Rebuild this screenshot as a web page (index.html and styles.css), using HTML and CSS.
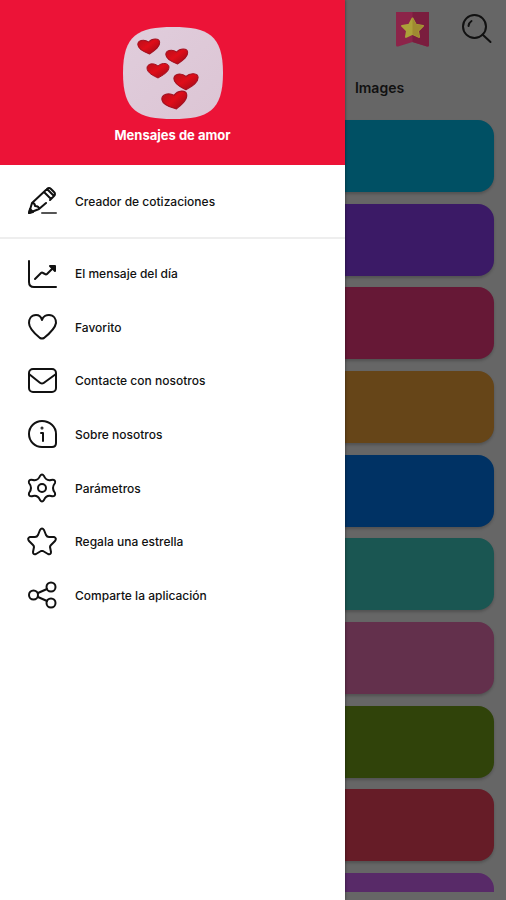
FILE: index.html
```html
<!DOCTYPE html>
<html lang="es">
<head>
<meta charset="utf-8">
<meta name="viewport" content="width=device-width, initial-scale=1">
<title>Mensajes de amor</title>
<link rel="stylesheet" href="styles.css">
</head>
<body>
<main class="page">
  <header class="toolbar">
    <button class="tool" type="button">
      <svg width="35" height="36" viewBox="0 0 35 36">
        <path fill="#8c2449" d="M1 1h33v33q0 2-2 1.500L17.500 31 3 35.500q-2 .5-2-1.500z"/>
        <path fill="#7a1d3e" d="M17.500 1H34v33q0 2-2 1.500L17.500 31z"/>
        <path fill="#aca139" stroke="#aca139" stroke-width="2" stroke-linejoin="round" d="M17.500 7.500l3.300 6.200 7.200 1.200-5 5 1 6-6.500-3-6.500 3 1-6-5-5 7.200-1.200z"/>
        <path fill="#9f8a31" d="M17.500 7l3.800 6.300 7.200 1.400-5.200 5.300 1.200 6.500-7-3z"/>
      </svg>
    </button>
    <button class="tool" type="button">
      <svg class="line" width="32" height="30" viewBox="0 0 32 30">
        <circle cx="13.500" cy="12.500" r="11.500"/>
        <path d="M21.500 20.500l8 7.500M7.500 12q.5-3.500 3-5"/>
      </svg>
    </button>
  </header>
  <nav class="tabs"><button class="tab" type="button">Images</button></nav>
  <section class="cards">
    <div class="card cyan"></div>
    <div class="card violet"></div>
    <div class="card crimson"></div>
    <div class="card ochre"></div>
    <div class="card blue"></div>
    <div class="card teal"></div>
    <div class="card mauve"></div>
    <div class="card olive"></div>
    <div class="card red"></div>
    <div class="card purple partial"></div>
  </section>
</main>

<aside class="drawer">
  <header class="brand">
    <svg width="102" height="94" viewBox="0 0 102 94">
      <defs>
        <linearGradient id="tile" x1="0" y1="0" x2="1" y2="1"><stop offset="0" stop-color="#e0cddc"/><stop offset="1" stop-color="#dcc5d4"/></linearGradient>
        <linearGradient id="gloss" x1="0" y1="0" x2="1" y2="1"><stop offset="0" stop-color="#b80f1b"/><stop offset=".45" stop-color="#df0d19"/><stop offset="1" stop-color="#980b17"/></linearGradient>
        <path id="heart" fill="url(#gloss)" stroke="#a31222" d="M0 7C-4 5-11 2-11-3c0-4 6-6 11-2 4-4 11-3 11 1 0 5-6 8-11 11z"/>
      </defs>
      <path fill="url(#tile)" d="M51 1C86 1 101 9 101 47S86 93 51 93 1 85 1 47 16 1 51 1z"/>
      <use href="#heart" transform="translate(27 21) rotate(-4)"/>
      <use href="#heart" transform="translate(55 31) rotate(-4)"/>
      <use href="#heart" transform="translate(36 45)"/>
      <use href="#heart" transform="translate(64 56) scale(1.100)"/>
      <use href="#heart" transform="translate(53 75) rotate(-10) scale(1.150)"/>
    </svg>
    <h1 class="name">Mensajes de amor</h1>
  </header>
  <nav class="menu">
    <a class="item creator" href="#">
      <svg class="line" width="30" height="30" viewBox="0 0 30 30"><path d="M2 27l3-10L20 3q2-2 4 0l3 3q2 2 0 4l-4 4M5 17q3 0 3 3 4 0 4 3l7-6M12 23L2 27M17 6l7 7M20 3l7 7"/><path d="M2 27l1-4 3 3z" fill="#111"/><path stroke="#555" d="M15 27h14"/></svg>
      Creador de cotizaciones
    </a>
    <div class="group">
      <a class="item" href="#">
        <svg class="line" width="30" height="30" viewBox="0 0 30 30"><path d="M2 2v21q0 5 5 5h22M8 20l6-6q1-1 2 0l2 1q1 1 2 0l7-7"/><path fill="#111" d="M23 7h5v5z"/></svg>
        El mensaje del día
      </a>
      <a class="item" href="#">
        <svg class="line" width="30" height="30" viewBox="0 0 30 30"><path d="M15 8C14 4 11 3 9 3 4 3 2 7 2 11c0 6 6 11 11 15q2 1 4 0c5-4 11-9 12-15 0-4-2-8-7-8-2 0-6 1-7 5z"/></svg>
        Favorito
      </a>
      <a class="item" href="#">
        <svg class="line" width="30" height="30" viewBox="0 0 30 30"><rect x="2" y="3" width="27" height="23" rx="4"/><path d="M2 8l10 8q3 3 6 0L29 8"/></svg>
        Contacte con nosotros
      </a>
      <a class="item" href="#">
        <svg class="line" width="30" height="30" viewBox="0 0 30 30"><path d="M15 2a13 13 0 1 0 0 26h10q4 0 4-4v-9A14 13 0 0 0 15 2zM14 14h2v8"/><circle cx="15" cy="9" r=".5" fill="#111"/></svg>
        Sobre nosotros
      </a>
      <a class="item" href="#">
        <svg class="line" width="30" height="30" viewBox="0 0 30 30"><path d="M13 3q2-3 4 0 2 5 7 4 5-1 4 3-4 5 0 10 1 4-4 3-5-1-7 4-2 3-4 0-2-5-7-4-5 1-4-3 4-5 0-10-1-4 4-3 5 1 7-4z"/><circle cx="15" cy="15" r="4"/></svg>
        Parámetros
      </a>
      <a class="item" href="#">
        <svg class="line" width="30" height="30" viewBox="0 0 30 30"><path d="M13 3q2-3 4 0l2 5q1 2 3 2l5 0q3 1 1 4l-4 4q-1 1-1 2l1 5q0 3-3 2l-5-3h-2l-5 3q-3 1-3-2l1-5q0-1-1-2l-4-4q-2-3 1-4l5 0q2 0 3-2z"/></svg>
        Regala una estrella
      </a>
      <a class="item" href="#">
        <svg class="line" width="30" height="30" viewBox="0 0 30 30"><circle cx="6.500" cy="15" r="4.500"/><circle cx="24" cy="7" r="4.500"/><circle cx="24" cy="23" r="4.500"/><path d="M11 13l9-4M11 17l9 4"/></svg>
        Comparte la aplicación
      </a>
    </div>
  </nav>
</aside>
</body>
</html>
```

FILE: styles.css
```css
* { box-sizing: border-box; }

body {
  margin: 0;
  position: relative;
  min-height: 100vh;
  font-family: Inter, "Liberation Sans", sans-serif;
  font-size: 12px;
  color: #111;
  background: #666;
}

button {
  padding: 0;
  border: 0;
  background: none;
  font: inherit;
  color: inherit;
}

svg { display: block; flex: none; }

.line {
  fill: none;
  stroke: #111;
  stroke-width: 2;
  stroke-linecap: round;
  stroke-linejoin: round;
}

.page {
  display: flex;
  flex-direction: column;
  min-height: 100vh;
  padding-bottom: 8px;
}

.toolbar {
  display: flex;
  justify-content: flex-end;
  align-items: center;
  gap: 31px;
  height: 57px;
  padding-right: 13px;
}

.tabs {
  display: grid;
  grid-template-columns: 1fr 1fr;
  height: 63px;
}

.tab {
  grid-column: 2;
  height: 60px;
  font-size: 14px;
  font-weight: 600;
}

.cards {
  flex: 1;
  display: flex;
  flex-direction: column;
  justify-content: space-between;
  padding: 0 12px;
}

.card {
  height: 72px;
  border-radius: 16px;
  box-shadow: 0 2px 3px rgba(0, 0, 0, 0.2);
}

.partial {
  height: 19px;
  border-radius: 16px 16px 0 0;
  box-shadow: none;
}

.cyan { background: #005064; }
.violet { background: #3b1a66; }
.crimson { background: #661836; }
.ochre { background: #664518; }
.blue { background: #003264; }
.teal { background: #1a5652; }
.mauve { background: #63304c; }
.olive { background: #30430a; }
.red { background: #661c27; }
.purple { background: #582a68; }

.drawer {
  position: absolute;
  top: 0;
  bottom: 0;
  left: 0;
  width: 68.2%;
  background: #fff;
  box-shadow: 0 0 3px rgba(0, 0, 0, 0.5);
}

.brand {
  display: flex;
  flex-direction: column;
  align-items: center;
  gap: 6px;
  height: 165px;
  padding-top: 26px;
  background: #ec1337;
  color: #fff;
}

.name {
  margin: 0;
  font-size: 13px;
  line-height: 18px;
  font-weight: 700;
}

.item {
  display: flex;
  align-items: center;
  gap: 18px;
  padding-left: 27px;
  color: inherit;
  font-weight: 500;
  text-decoration: none;
}

.creator {
  height: 74px;
  border-bottom: 2px solid #eee;
}

.group {
  display: grid;
  grid-auto-rows: 1fr;
  height: 375px;
  margin-top: 8px;
}
```
